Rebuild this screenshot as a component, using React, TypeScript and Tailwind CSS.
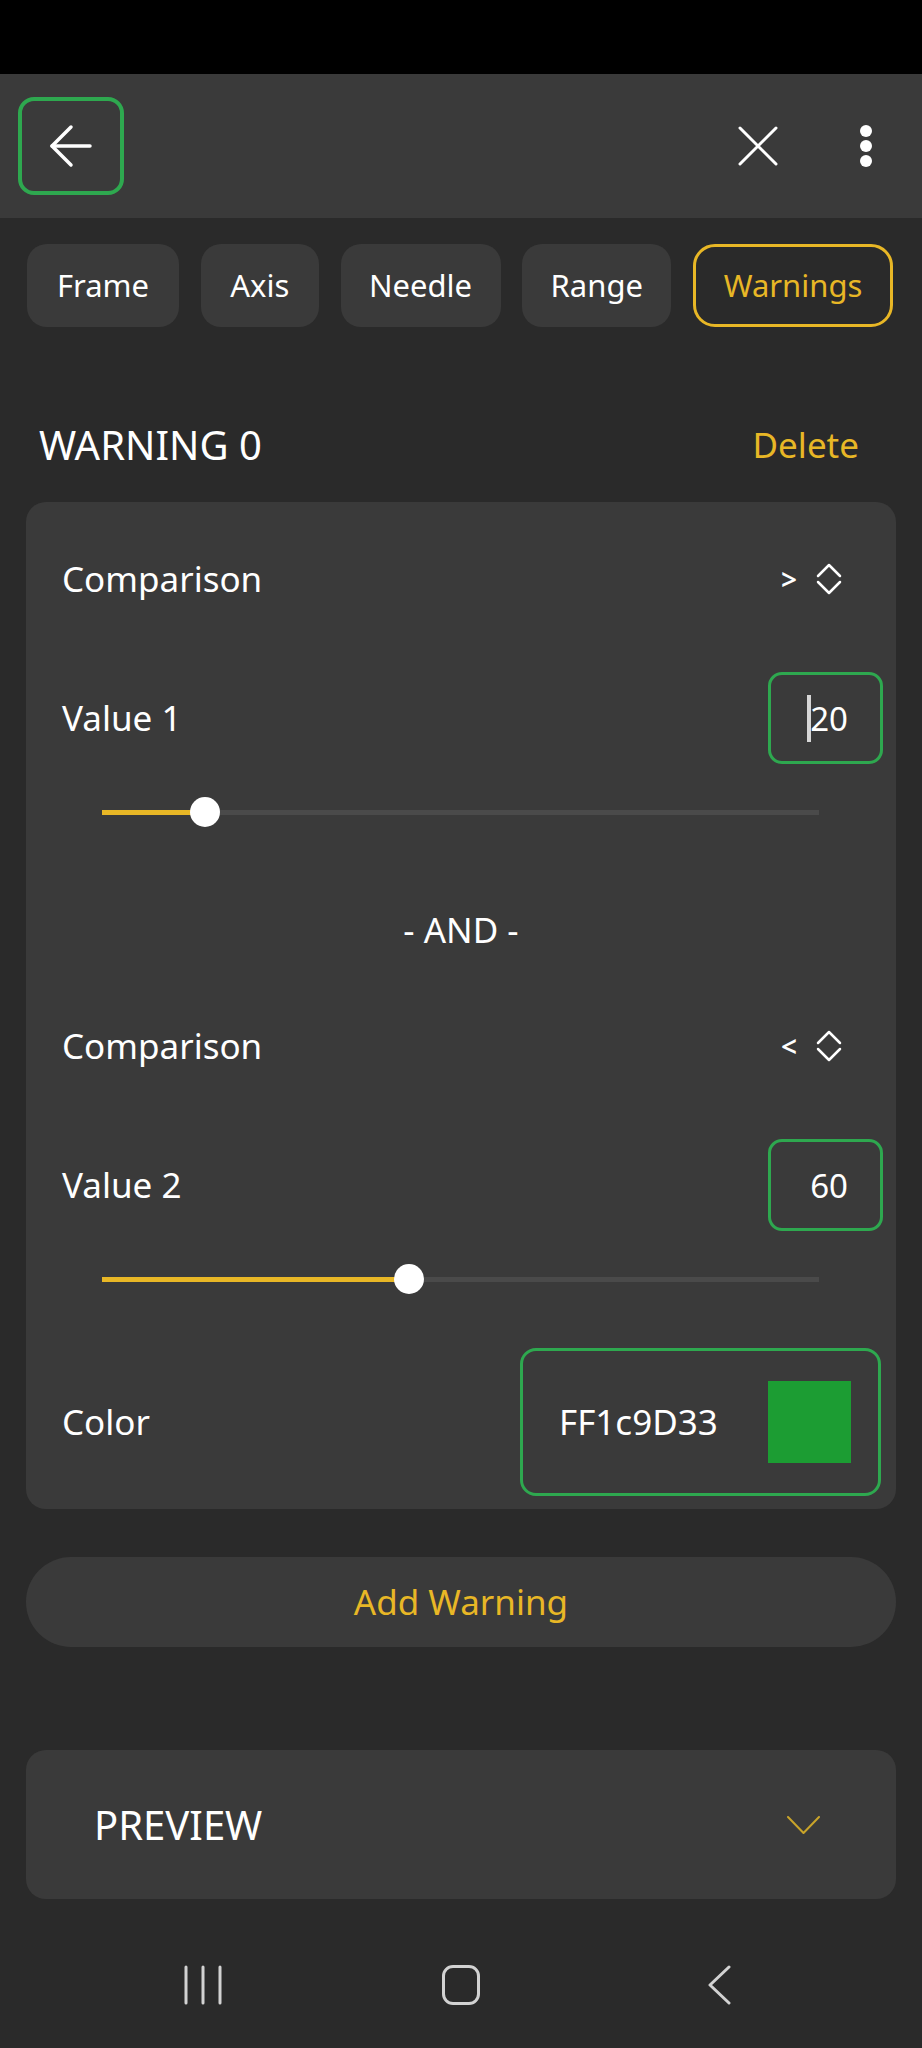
import React from 'react';

const YELLOW = 'text-[#e8b726]';

function BackArrow() {
  return (
    <svg width="44" height="44" viewBox="0 0 44 44" fill="none" stroke="#ffffff" strokeWidth="3.5" strokeLinecap="round" strokeLinejoin="round">
      <path d="M3 22h38" />
      <path d="M22 3L3 22l19 19" />
    </svg>
  );
}

function CloseIcon() {
  return (
    <svg width="40" height="40" viewBox="0 0 40 40" fill="none" stroke="#ffffff" strokeWidth="3" strokeLinecap="round">
      <path d="M2 2l36 36M38 2L2 38" />
    </svg>
  );
}

function Kebab() {
  return (
    <div className="flex flex-col items-center gap-[3px]">
      <span className="w-[12px] h-[12px] rounded-full bg-white" />
      <span className="w-[12px] h-[12px] rounded-full bg-white" />
      <span className="w-[12px] h-[12px] rounded-full bg-white" />
    </div>
  );
}

function UpDown() {
  return (
    <svg width="26" height="32" viewBox="0 0 26 32" fill="none" stroke="#ffffff" strokeWidth="2.5" strokeLinecap="round" strokeLinejoin="round">
      <path d="M2 13L13 2l11 11" />
      <path d="M2 19l11 11 11-11" />
    </svg>
  );
}

function ComparisonRow({ op, className = '' }: { op: string; className?: string }) {
  return (
    <div className={`flex items-center justify-between h-[60px] ${className}`}>
      <span className="text-[35px] text-white">Comparison</span>
      <div className="flex items-center gap-[19px] mr-[41px]">
        <span className="text-[28px] font-semibold text-white leading-none">{op}</span>
        <UpDown />
      </div>
    </div>
  );
}

function ValueRow({ label, value, caret, className = '' }: { label: string; value: string; caret?: boolean; className?: string }) {
  return (
    <div className={`flex items-center justify-between h-[92px] ${className}`}>
      <span className="text-[35px] text-white">{label}</span>
      <div className="w-[115px] h-[92px] rounded-[14px] border-[3px] border-[#2ea84f] flex items-center justify-end pr-[32px]">
        {caret && <span className="w-[4px] h-[47px] bg-[#d6d6d6] -mr-[1px]" />}
        <span className="text-[33px] text-white leading-none">{value}</span>
      </div>
    </div>
  );
}

function Slider({ pct, className = '' }: { pct: number; className?: string }) {
  return (
    <div className={`relative h-[32px] ml-[40px] mr-[64px] flex items-center ${className}`}>
      <div className="w-full h-[5px] bg-[#4a4a4a]">
        <div className="h-full bg-[#e8b726]" style={{ width: `${pct}%` }} />
      </div>
      <span
        className="absolute top-[1px] w-[30px] h-[30px] -ml-[15px] rounded-full bg-white"
        style={{ left: `${pct}%` }}
      />
    </div>
  );
}

const tabs = [
  { name: 'Frame', w: 'w-[152px]' },
  { name: 'Axis', w: 'w-[118px]' },
  { name: 'Needle', w: 'w-[160px]' },
  { name: 'Range', w: 'w-[149px]' },
];

export default function App() {
  return (
    <div className="min-h-[2048px] bg-[#2a2a2a] font-['Noto_Sans',sans-serif]">
      <div className="h-[74px] bg-black" />

      <header className="h-[144px] bg-[#3a3a3a] flex items-center justify-between pl-[18px] pr-[50px]">
        <button type="button" className="w-[106px] h-[98px] rounded-[16px] border-[4px] border-[#2ea84f] flex items-center justify-center">
          <BackArrow />
        </button>
        <div className="flex items-center gap-[82px]">
          <CloseIcon />
          <Kebab />
        </div>
      </header>

      <nav className="mt-[26px] flex justify-between pl-[27px] pr-[29px]">
        {tabs.map((t) => (
          <div key={t.name} className={`${t.w} h-[83px] rounded-[20px] bg-[#3a3a3a] flex items-center justify-center text-[31px] text-white`}>
            {t.name}
          </div>
        ))}
        <div className={`w-[200px] h-[83px] rounded-[22px] border-[3px] border-[#e8b726] flex items-center justify-center text-[31px] ${YELLOW}`}>
          Warnings
        </div>
      </nav>

      <div className="mt-[88px] h-[60px] flex items-center justify-between pl-[39px] pr-[63px]">
        <span className="text-[40px] text-white">WARNING 0</span>
        <span className={`text-[35px] ${YELLOW}`}>Delete</span>
      </div>

      <section className="mx-[26px] mt-[27px] rounded-[20px] bg-[#3a3a3a] pl-[36px] pr-[13px] pt-[47px] pb-[13px]">
        <ComparisonRow op=">" />
        <ValueRow label="Value 1" value="20" caret className="mt-[63px]" />
        <Slider pct={14.4} className="mt-[32px]" />
        <div className="mt-[77px] h-[50px] flex items-center justify-center pr-[23px] text-[35px] text-white">- AND -</div>
        <ComparisonRow op="<" className="mt-[61px]" />
        <ValueRow label="Value 2" value="60" className="mt-[63px]" />
        <Slider pct={42.8} className="mt-[32px]" />
        <div className="mt-[53px] h-[148px] flex items-center justify-between">
          <span className="text-[35px] text-white">Color</span>
          <div className="w-[361px] h-[148px] mr-[2px] rounded-[16px] border-[3px] border-[#2ea84f] flex items-center justify-between pl-[36px] pr-[27px]">
            <span className="text-[35px] text-white">FF1c9D33</span>
            <span className="w-[83px] h-[82px] bg-[#1c9d33]" />
          </div>
        </div>
      </section>

      <button type="button" className={`mx-[26px] mt-[48px] w-[870px] h-[90px] rounded-full bg-[#3a3a3a] text-[35px] ${YELLOW}`}>
        Add Warning
      </button>

      <div className="mx-[26px] mt-[103px] h-[149px] rounded-[20px] bg-[#3a3a3a] flex items-center justify-between pl-[68px] pr-[76px]">
        <span className="text-[40px] text-white">PREVIEW</span>
        <svg width="33" height="18" viewBox="0 0 33 18" fill="none" stroke="#c9a42a" strokeWidth="2" strokeLinecap="round" strokeLinejoin="round">
          <path d="M1 1l15.5 16L32 1" />
        </svg>
      </div>

      <div className="mt-[66px] h-[40px] flex justify-center">
        <div className="w-[258px] flex justify-center">
          <svg width="38" height="40" viewBox="0 0 38 40" fill="none" stroke="#d2d2d2" strokeWidth="3" strokeLinecap="round">
            <path d="M2 2v36M19 2v36M36 2v36" />
          </svg>
        </div>
        <div className="w-[258px] flex justify-center">
          <div className="w-[38px] h-[40px] rounded-[11px] border-[3px] border-[#d2d2d2]" />
        </div>
        <div className="w-[258px] flex justify-center">
          <svg width="24" height="40" viewBox="0 0 24 40" fill="none" stroke="#d2d2d2" strokeWidth="3" strokeLinecap="round" strokeLinejoin="round">
            <path d="M22 2L3 20l19 18" />
          </svg>
        </div>
      </div>
    </div>
  );
}
